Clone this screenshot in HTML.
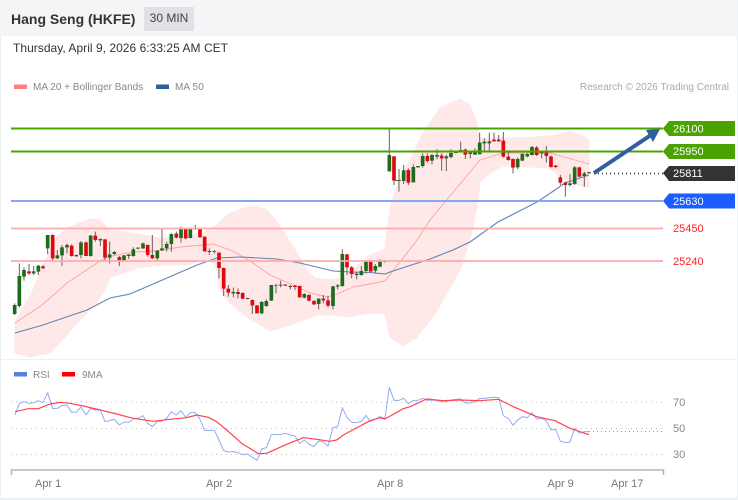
<!DOCTYPE html>
<html><head><meta charset="utf-8"><style>
html,body{margin:0;padding:0;background:#fff}
#p{position:relative;width:738px;height:500px;overflow:hidden;background:#fff;font-family:"Liberation Sans",sans-serif}
#h{position:absolute;left:0;top:0;width:738px;height:36px;background:#f6f4f7}
#t{position:absolute;left:11px;top:10px;font-size:14px;font-weight:bold;color:#333;line-height:18px;white-space:nowrap}
#b{position:absolute;left:144px;top:7px;width:50px;height:24px;background:#dfe1e5;color:#444;font-size:12px;line-height:23px;text-align:center}
#d{position:absolute;left:13px;top:41px;font-size:12px;line-height:15px;color:#333;white-space:nowrap;letter-spacing:.03px}
svg{position:absolute;left:0;top:0}
text{font-family:"Liberation Sans",sans-serif}
</style></head><body><div id="p">
<div id="h"></div>
<div id="t">Hang Seng (HKFE)</div>
<div id="b">30 MIN</div>
<div id="d">Thursday, April 9, 2026 6:33:25 AM CET</div>
<svg width="738" height="500" viewBox="0 0 738 500">
<rect x="0" y="36" width="1" height="464" fill="#eef1f4"/><rect x="737" y="0" width="1" height="500" fill="#eef1f4"/><rect x="0" y="498" width="738" height="2" fill="#eef1f4"/><rect x="0" y="359" width="738" height="1" fill="#eef1f4"/>
<rect x="14" y="84.5" width="13" height="4.5" fill="#ff8080"/><text x="33" y="90" font-size="10" fill="#888" letter-spacing=".02">MA 20 + Bollinger Bands</text>
<rect x="156" y="84.5" width="13" height="4.5" fill="#2f5f9f"/><text x="175" y="90" font-size="10" fill="#888" letter-spacing=".1">MA 50</text>
<text x="729" y="90" font-size="10" fill="#aaa" text-anchor="end">Research © 2026 Trading Central</text>

<polygon fill="#ffe8e8" stroke="#ffe8e8" stroke-linejoin="round" points="15,322 33,290 43,265 57,237 67,228 80,223 90,219 100,220 110,230 133,233 160,238 187,237 203,233 217,225 227,215 243,208 257,206 267,210 277,222 287,237 297,253 307,270 315,278 330,280 343,278 370,255 385,249 390,207 398,183 410,160 423,133 440,108 460,99 470,105 477,123 480,138 503,138 537,137 557,135 570,131 587,138 589,140 589,188 570,183 560,177 550,168 510,166 503,166 490,173 480,182 477,207 470,240 460,270 447,293 433,317 417,337 403,346 390,337 385,314 370,313 347,317 333,315 317,315 290,325 270,331 247,317 230,303 220,290 217,270 213,263 203,260 187,265 160,265 137,268 110,278 103,293 93,307 77,323 62,340 50,353 30,357 15,353"/>
<polyline fill="none" stroke="#ffa0a0" stroke-width=".9" points="15,323 42,305 67,283 97,263 107,257 133,252 157,251 180,247 203,245 213,244 233,251 253,263 270,275 293,285 310,293 327,297 337,294 353,287 370,284 385,281 400,262 417,240 430,220 455,190 480,160 503,153 550,153 589,164"/>
<polyline fill="none" stroke="#5f85b8" stroke-width="1.1" points="15,333 43,325 87,310 110,298 130,294 167,278 197,265 217,258 240,257 277,259 300,263 333,271 350,272 370,272.5 385,274 390,272 430,259 453,250 470,242 498,222 537,202 555,190 565,183 589,175"/>

<g transform="translate(0,190) scale(.33333)">
<path fill="none" stroke="#6b5f5f" stroke-width="3" d="M44 340V375M58 220V352M72 232V272M87 222V255M101 228V255M115 225V255M129 225V236M143 135V192M158 133V212M172 180V207M186 165V228M201 160V190M215 163V200M229 194V200M243 153V205M258 155V198M272 135V200M286 125V155M301 145V168M315 147V212M329 155V220M343 183V195M358 198V228M372 195V215M386 192V207M400 172V200M414 172V178M429 158V177M443 163V200M457 135V207M472 180V212M486 117V183M500 155V185M514 130V185M529 125V145M543 110V158M557 115V148M571 115V145M586 105V120M600 115V143M614 140V185M628 175V195M643 180V190M657 187V265M671 232V318M685 285V320M700 293V322M714 295V325M728 307V328M743 323V328M757 328V372M771 345V370M785 333V372M799 328V350M814 285V333M828 282V310M842 272V292M856 282V288M871 285V298M885 285V300M899 287V323M913 310V325M927 312V335M942 330V345M956 325V358M970 315V340M984 318V352M999 288V358M1013 282V298M1027 178V290M1041 192V255M1055 228V265M1070 245V268M1084 228V257M1098 212V250"/>
<path fill="none" stroke="#1b6d1b" stroke-width="11" d="M44 345V372M58 258V348M72 240V260M101 244V250M115 227V245M143 135V175M172 196V205M186 172V196M201 165V172M229 195V199M243 157V195M272 137V198M301 147V151M329 193V203M343 186V192M372 196V213M386 194V198M400 178V198M414 173V176M429 160V175M472 182V205M486 175V181M500 162V175M514 132V162M543 117V144M571 117V144M586 115V117M628 183V186M643 184V186M700 306V310M785 336V370M799 333V348M814 285V332M828 285V287M842 284V287M913 312V323M956 326V342M999 289V348M1013 286V290M1027 192V288M1084 243V255M1098 213V243"/>
<path fill="none" stroke="#e00810" stroke-width="11" d="M87 244V250M129 229V235M158 135V205M215 167V198M258 157V198M286 137V150M315 148V203M358 201V215M443 165V195M457 195V205M529 131V143M557 117V145M600 116V142M614 140V184M657 188V234M671 234V296M685 296V308M714 306V312M728 309V326M757 330V346M771 346V370M856 284V287M885 287V291M899 288V322M927 315V332M942 333V343M970 326V331M984 331V347M1041 193V232M1055 232V252"/>
<path fill="none" stroke="#5a4a3a" stroke-width="11" d="M643 184V186M743 324V327M871 288V291M1070 251V255"/>
</g>
<g transform="translate(370,70) scale(.33333)">
<path fill="none" stroke="#6b5f5f" stroke-width="3" d="M2 570V605M16 582V610M30 568V592M44 570V578M58 175V305M72 258V345M87 297V365M101 285V342M115 295V345M130 283V337M144 288V292M158 250V293M172 250V278M186 252V283M201 238V268M215 250V302M229 255V303M243 238V265M258 245V250M272 215V248M286 235V267M301 245V265M315 235V255M329 188V245M343 205V243M358 188V243M372 188V215M386 195V215M400 186V263M415 245V272M429 265V310M443 262V297M457 250V273M472 250V262M486 228V257M500 228V258M515 245V265M529 228V278M543 257V293M557 285V295M571 315V345M586 335V380M600 312V350M614 288V345M628 290V322M643 305V350M657 306V310"/>
<path fill="none" stroke="#1b6d1b" stroke-width="11" d="M16 588V602M30 572V590M58 255V304M82 330V333M101 301V333M130 291V337M144 288V292M158 258V288M186 255V272M201 255V260M243 249V261M258 246V249M272 240V245M301 248V252M315 247V254M329 218V253M343 215V220M358 214V220M457 252V272M443 267V292M472 252V259M486 231V255M515 247V250M600 340V345M614 292V342M643 310V318"/>
<path fill="none" stroke="#e00810" stroke-width="11" d="M2 575V605M44 572V576M72 259V332M115 300V338M172 258V273M215 257V265M286 239V254M372 209V214M386 209V214M400 212V260M415 260V270M429 267V293M500 233V255M529 248V258M543 259V291M557 287V291M571 322V338M586 338V345M628 292V320"/>
<path fill="none" stroke="#5a4a3a" stroke-width="11" d="M87 330V333M229 259V265M657 306V310"/>
</g>

<g fill="none" stroke-width="2">
<path stroke="#4ba300" d="M11 128.5H663M11 151.5H663"/>
<path stroke="#82a8f0" d="M11 201H663"/>
<path stroke="#ffabab" stroke-width="1.7" d="M11 228.5H663M11 261H663"/>
</g>
<path fill="none" stroke="#333" stroke-width="1.5" stroke-dasharray="1 3" d="M594 173.5H663"/>
<path fill="none" stroke="#2f5f9f" stroke-width="4" d="M594 173L651 135"/>
<polygon fill="#2f5f9f" points="660,129 646,130 653,142"/>

<polygon fill="#4aa300" points="663,128.5 669,121 735,121 735,136 669,136"/>
<polygon fill="#4aa300" points="663,151.5 669,144 735,144 735,159 669,159"/>
<polygon fill="#333" points="663,173 669,166 735,166 735,181 669,181"/>
<polygon fill="#1a5eff" points="663,201 669,193.5 735,193.5 735,208.5 669,208.5"/>
<g font-size="11" fill="#fff">
<text x="673" y="132.5">26100</text><text x="673" y="155">25950</text><text x="673" y="177">25811</text><text x="673" y="205">25630</text>
</g>
<g font-size="11" fill="#f22">
<text x="673" y="232">25450</text><text x="673" y="265">25240</text>
</g>

<rect x="14" y="372" width="13" height="4.5" fill="#5a7fe0"/><text x="33" y="378" font-size="10" fill="#888">RSI</text>
<rect x="62" y="372" width="13" height="4.5" fill="#f00"/><text x="82" y="378" font-size="10" fill="#888">9MA</text>
<path fill="none" stroke="#bbb" stroke-width="1" stroke-dasharray="1 4" d="M11 402H664M11 428.5H664M11 454.5H664"/>
<g font-size="11" fill="#888"><text x="673" y="406">70</text><text x="673" y="432">50</text><text x="673" y="458">30</text></g>
<path fill="none" stroke="#b5b5b5" stroke-width="1.5" d="M11.5 475V470H663.5V475"/>
<g font-size="11" fill="#777"><text x="35" y="487">Apr 1</text><text x="206" y="487">Apr 2</text><text x="377" y="487">Apr 8</text><text x="547.5" y="487">Apr 9</text><text x="611" y="487">Apr 17</text></g>

<g transform="translate(0,360) scale(.33333)" fill="none" stroke-linejoin="round">
<polyline stroke="#92abf2" stroke-width="3" points="45,165 58,130 72,125 87,130 101,128 115,122 129,128 143,98 158,146 172,145 186,137 201,135 215,157 229,156 243,141 258,165 272,145 286,150 301,150 315,185 329,182 343,178 358,195 372,186 386,187 400,177 414,175 429,167 443,190 457,200 472,185 486,183 500,175 514,155 529,165 543,152 557,172 571,158 586,158 600,178 614,211 628,211 643,211 657,240 671,272 685,276 700,275 714,278 728,284 743,282 757,292 771,301 785,267 799,263 814,224 828,224 842,223 856,220 871,225 885,228 899,250 913,240 927,252 942,260 956,243 970,246 984,258 999,203 1013,200 1027,143 1041,172 1055,187 1070,188 1084,184 1098,166 1110,185 1125,178 1140,170 1155,175 1168,82 1182,121 1197,121 1211,115 1225,131 1240,121 1254,121 1268,115 1282,121 1296,120 1311,121 1325,125 1339,124 1353,120 1368,118 1382,117 1396,129 1411,129 1425,125 1439,115 1453,115 1468,113 1482,112 1496,113 1510,167 1525,175 1539,196 1553,180 1567,170 1582,173 1596,158 1610,177 1625,175 1639,182 1653,210 1667,208 1681,243 1696,248 1710,246 1724,205 1738,220 1753,215 1767,215"/>
<path stroke="#6d8ff0" stroke-width="3" stroke-dasharray="3 9" d="M1767 215H1990"/>
<polyline stroke="#ff4450" stroke-width="3.6" points="45,155 85,146 115,146 150,132 180,127 210,130 250,138 310,152 350,162 400,175 460,184 510,178 560,173 590,165 625,172 650,185 680,210 725,250 775,281 800,280 860,253 910,233 950,238 990,244 1010,240 1030,225 1110,182 1140,173 1155,177 1210,146 1230,140 1280,117 1330,122 1380,120 1440,122 1496,118 1540,140 1610,170 1665,182 1710,205 1767,224"/>
</g>
</svg>
</div></body></html>
